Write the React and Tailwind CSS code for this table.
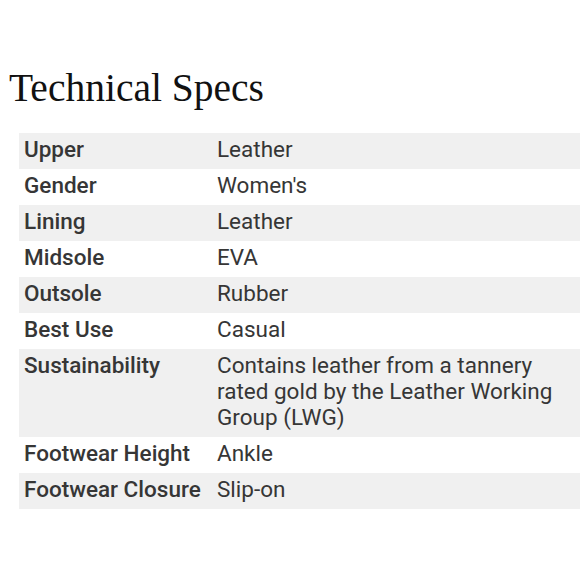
const specs = [
  ['Upper', 'Leather'],
  ['Gender', "Women's"],
  ['Lining', 'Leather'],
  ['Midsole', 'EVA'],
  ['Outsole', 'Rubber'],
  ['Best Use', 'Casual'],
  ['Sustainability', 'Contains leather from a tannery rated gold by the Leather Working Group (LWG)'],
  ['Footwear Height', 'Ankle'],
  ['Footwear Closure', 'Slip-on'],
];

export default function App() {
  return (
    <div className="w-[580px] h-[580px] bg-white overflow-hidden pt-[66px]">
      <h2 className="pl-[9px] text-[39.5px] leading-[44px] text-[#111] font-['Liberation_Serif',serif]">
        Technical Specs
      </h2>
      <table className="ml-[19px] mt-[23px] w-[561px] border-collapse font-['Roboto',sans-serif] text-[22.5px] leading-[26px] text-[#363636]">
        <tbody>
          {specs.map(([label, value], i) => (
            <tr key={label} className={i % 2 === 0 ? 'bg-[#f0f0f0]' : 'bg-white'}>
              <th className="w-[198px] pl-[5px] pt-[3px] pb-[7px] text-left align-top font-medium">{label}</th>
              <td className="pt-[3px] pb-[7px] pr-[20px] align-top">{value}</td>
            </tr>
          ))}
        </tbody>
      </table>
    </div>
  );
}
